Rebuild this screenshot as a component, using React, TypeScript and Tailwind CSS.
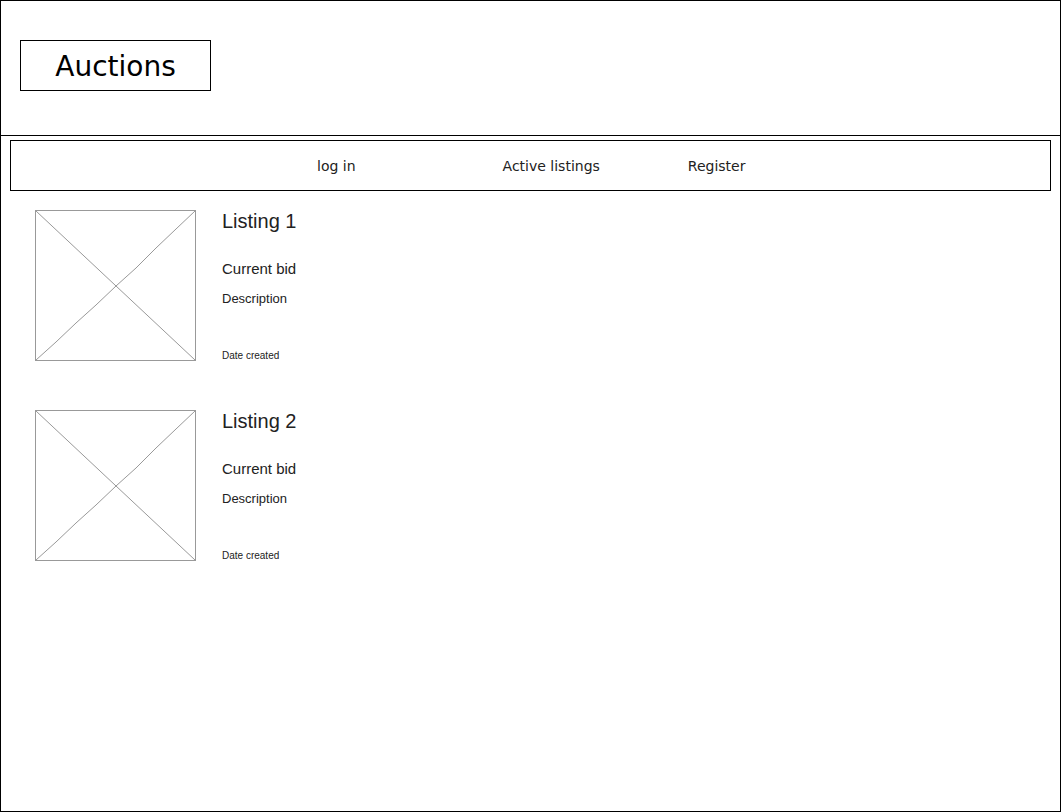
const listings = ["Listing 1", "Listing 2"];

function Placeholder() {
  return (
    <div className="h-[151px] w-[161px] shrink-0 border border-[#999]">
      <svg width="159" height="149" viewBox="0 0 159 149" className="block">
        <line x1="0" y1="0" x2="159" y2="149" stroke="#999" strokeWidth="1" />
        <path
          d="M0 149 L20 131 L40 112 L60 94 L80 75 L100 57 L120 37 L140 18 L159 0"
          fill="none"
          stroke="#999"
          strokeWidth="1"
        />
      </svg>
    </div>
  );
}

export default function App() {
  return (
    <main className="flex h-[812px] w-[1061px] flex-col border border-black bg-white font-['Liberation_Sans',sans-serif]">
      <header className="h-[135px] shrink-0 border-b border-black pl-[19px] pt-[39px]">
        <div className="flex h-[51px] w-[191px] items-center justify-center border border-black pt-[3px] font-['DejaVu_Sans',sans-serif] text-[28px] text-black">
          Auctions
        </div>
      </header>

      <nav className="mx-[9px] mt-[4px] flex h-[51px] items-center border border-black pt-[2px] font-['DejaVu_Sans',sans-serif] text-[14px] text-[#222]">
        <span className="ml-[306px]">log in</span>
        <span className="ml-[147px]">Active listings</span>
        <span className="ml-[88px]">Register</span>
      </nav>

      <section className="flex flex-col gap-[48px] pl-[34px] pt-[19px]">
        {listings.map((title) => (
          <div key={title} className="flex gap-[26px]">
            <Placeholder />
            <div className="flex flex-col text-[#222]">
              <h2 className="text-[20px] leading-[23px]">{title}</h2>
              <p className="mt-[27px] text-[15px] leading-[17px]">Current bid</p>
              <p className="mt-[14px] text-[13px] leading-[15px]">Description</p>
              <p className="mt-[44px] text-[10px] leading-[12px]">Date created</p>
            </div>
          </div>
        ))}
      </section>
    </main>
  );
}
